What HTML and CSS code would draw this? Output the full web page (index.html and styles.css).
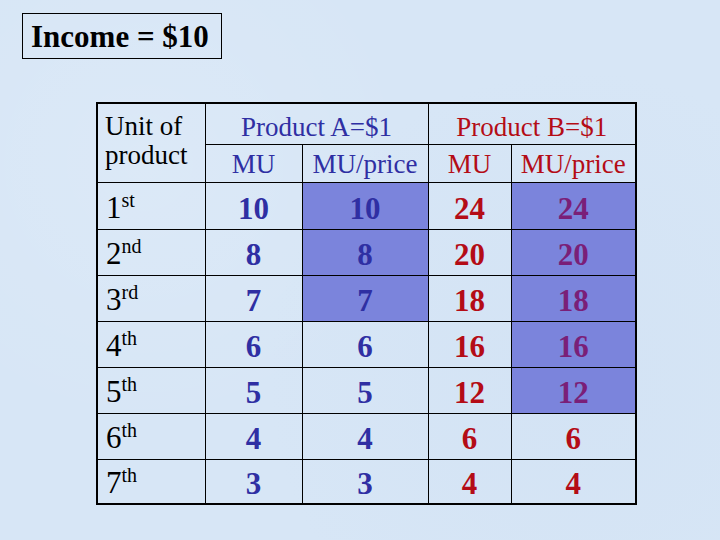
FILE: index.html
```html
<!DOCTYPE html>
<html>
<head>
<meta charset="utf-8">
<link rel="stylesheet" href="styles.css">
</head>
<body>
<div class="slide">
  <div class="title">Income = $10</div>
  <table class="mu">
    <colgroup>
      <col class="c1"><col class="c2"><col class="c3"><col class="c4"><col class="c5">
    </colgroup>
    <tr class="h1">
      <td rowspan="2" class="unit">Unit of<br>product</td>
      <td colspan="2" class="a head">Product A=$1</td>
      <td colspan="2" class="b head">Product B=$1</td>
    </tr>
    <tr class="h2">
      <td class="a head">MU</td>
      <td class="a head">MU/price</td>
      <td class="b head">MU</td>
      <td class="b head">MU/price</td>
    </tr>
    <tr class="r r1"><td class="ord">1<sup>st</sup></td><td class="a num">10</td><td class="a num hl">10</td><td class="b num">24</td><td class="p num hl">24</td></tr>
    <tr class="r"><td class="ord">2<sup>nd</sup></td><td class="a num">8</td><td class="a num hl">8</td><td class="b num">20</td><td class="p num hl">20</td></tr>
    <tr class="r"><td class="ord">3<sup>rd</sup></td><td class="a num">7</td><td class="a num hl">7</td><td class="b num">18</td><td class="p num hl">18</td></tr>
    <tr class="r"><td class="ord">4<sup>th</sup></td><td class="a num">6</td><td class="a num">6</td><td class="b num">16</td><td class="p num hl">16</td></tr>
    <tr class="r"><td class="ord">5<sup>th</sup></td><td class="a num">5</td><td class="a num">5</td><td class="b num">12</td><td class="p num hl">12</td></tr>
    <tr class="r"><td class="ord">6<sup>th</sup></td><td class="a num">4</td><td class="a num">4</td><td class="b num">6</td><td class="b num">6</td></tr>
    <tr class="r last"><td class="ord">7<sup>th</sup></td><td class="a num">3</td><td class="a num">3</td><td class="b num">4</td><td class="b num">4</td></tr>
  </table>
</div>
</body>
</html>
```

FILE: styles.css
```css
html, body {
  margin: 0;
  padding: 0;
}
body {
  width: 720px;
  height: 540px;
  background: #d7e6f6;
  font-family: "Liberation Serif", "Times New Roman", serif;
  overflow: hidden;
}
.slide {
  width: 720px;
  height: 540px;
  background:
    radial-gradient(circle at 20% 30%, rgba(255,255,255,0.12), transparent 40%),
    radial-gradient(circle at 80% 70%, rgba(190,210,235,0.15), transparent 45%),
    #d7e6f6;
  padding: 13px 0 0 22px;
  box-sizing: border-box;
}
.title {
  display: inline-block;
  box-sizing: border-box;
  width: 200px;
  height: 46px;
  border: 1.5px solid #000;
  font-weight: bold;
  font-size: 31px;
  line-height: 42px;
  padding: 2px 0 0 8px;
  color: #000;
  white-space: nowrap;
}
.mu {
  margin: 43px 0 0 74px;
  border-collapse: collapse;
  table-layout: fixed;
  width: 539px;
  border: 2px solid #000;
}
.c1 { width: 108px; }
.c2 { width: 97px; }
.c3 { width: 126px; }
.c4 { width: 83px; }
.c5 { width: 125px; }
.mu td {
  border: 1px solid #000;
  padding: 0;
  text-align: center;
  white-space: nowrap;
}
.h1 { height: 41px; }
.h2 { height: 38px; }
.r { height: 46px; }
.r1 { height: 47px; }
.last { height: 45px; }
.head {
  font-size: 27px;
  line-height: 30px;
}
.h1 .head {
  vertical-align: bottom;
  padding-bottom: 2px;
}
.h2 .head {
  vertical-align: middle;
  padding-top: 1px;
}
.unit {
  text-align: left !important;
  padding-left: 7px !important;
  font-size: 27px;
  line-height: 29px;
  vertical-align: top;
  padding-top: 8px !important;
  color: #000;
}
.a { color: #2f2fa3; }
.b { color: #b40c16; }
.p { color: #7a1f78; }
.num {
  font-weight: bold;
  font-size: 31px;
  line-height: 32px;
  padding-top: 6px !important;
}
.ord {
  text-align: left !important;
  padding-left: 8px !important;
  font-size: 31px;
  line-height: 32px;
  padding-top: 4px !important;
  color: #000;
}
.ord sup {
  font-size: 20px;
  line-height: 0;
  vertical-align: 11px;
}
.hl {
  background: #7b84dc;
}
```
